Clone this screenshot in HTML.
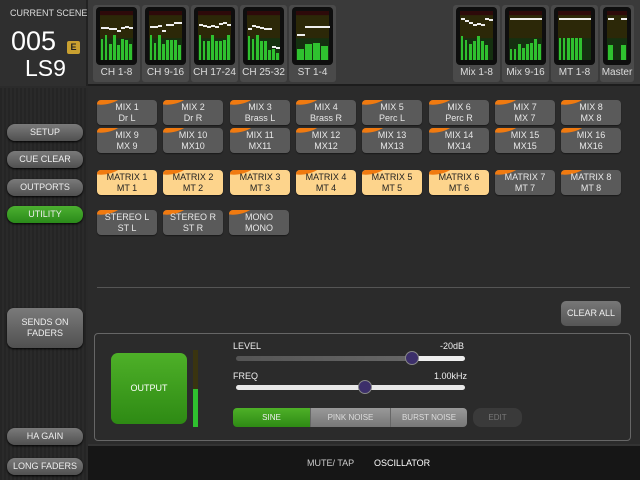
<!DOCTYPE html>
<html><head><meta charset="utf-8"><style>
*{box-sizing:border-box;margin:0;padding:0}
body{width:640px;height:480px;background:#2b2b2b;font-family:"Liberation Sans",sans-serif;color:#eee;position:relative;overflow:hidden}
.abs{position:absolute}
#top{left:0;top:0;width:640px;height:86px;background:#3a3a3a;border-bottom:2px solid #1c1c1c}
#scene{left:0;top:0;width:88px;height:86px;background:#2f2f2f;border-right:2px solid #222}
.mg{position:absolute;top:5px;height:77px;background:#4a4a4a;border-radius:3px}
.mb{position:absolute;left:3px;right:3px;top:2px;height:58px;background:#0e0e0e;border-radius:4px}
.mi{position:absolute;left:4px;right:4px;top:4px;bottom:5px;background:linear-gradient(#2e0a0a 0,#2e0a0a 8%,#2c2808 9%,#2c2808 55%,#153010 56%,#153010 100%)}
.bar{position:absolute;bottom:0;background:#2fc12f}
.pk{position:absolute;height:2px;background:#eee}
.ml{position:absolute;left:0;right:0;top:62px;text-align:center;font-size:10px;color:#ddd}
#side{left:0;top:88px;width:88px;height:392px;background:repeating-linear-gradient(90deg,#252525 0,#252525 2px,#2a2a2a 2px,#2a2a2a 4px)}
.sb{position:absolute;left:7px;width:76px;height:17px;border-radius:8px;background:linear-gradient(#7a7a7a,#505050);font-size:9px;text-align:center;line-height:17px;color:#eee;box-shadow:0 1px 2px #000}
.b{position:absolute;width:60px;height:25px;border-radius:4px;background:#5a5a5a;font-size:9px;text-align:center;line-height:11px;padding-top:2px;color:#e8e8e8;overflow:hidden;box-shadow:0 1px 1px #1a1a1a}
.b:before{content:"";position:absolute;left:-4px;top:-6px;width:28px;height:10px;background:#f07a10;border-radius:50%;transform:rotate(-12deg)}
.b span{position:relative}
.b.o{background:#fdd48c;color:#222}
#bot{left:88px;top:444px;width:552px;height:36px;background:#161616;border-top:2px solid #333}
</style></head><body>
<div id="top" class="abs"></div>
<div id="scene" class="abs">
<div class="abs" style="left:10px;top:8px;font-size:9px;color:#ddd;white-space:nowrap">CURRENT SCENE</div>
<div class="abs" style="left:11px;top:26px;font-size:27px;color:#fff">005</div>
<div class="abs" style="left:67px;top:41px;width:13px;height:13px;background:#c9a030;border-radius:2px;font-size:9px;color:#222;text-align:center;line-height:13px;font-weight:bold">E</div>
<div class="abs" style="left:25px;top:55px;font-size:23px;color:#fff">LS9</div>
</div>
<div id="meters"></div>
<div id="side" class="abs"></div>
<div class="sb" style="top:124px">SETUP</div>
<div class="sb" style="top:151px">CUE CLEAR</div>
<div class="sb" style="top:179px">OUTPORTS</div>
<div class="sb" style="top:206px;background:linear-gradient(#4cb030,#2a8a1a)">UTILITY</div>
<div class="sb" style="top:308px;height:40px;border-radius:7px;line-height:11px;padding-top:9px">SENDS ON<br>FADERS</div>
<div class="sb" style="top:428px">HA GAIN</div>
<div class="sb" style="top:458px">LONG FADERS</div>
<div id="btns"></div>
<div class="abs" style="left:97px;top:287px;width:533px;height:1px;background:#555"></div>
<div class="abs" style="left:561px;top:301px;width:60px;height:25px;border-radius:5px;background:linear-gradient(#777,#555);font-size:9px;text-align:center;line-height:25px">CLEAR ALL</div>
<div class="abs" style="left:94px;top:333px;width:537px;height:108px;border:1px solid #666;border-radius:4px"></div>
<div class="abs" style="left:111px;top:353px;width:76px;height:71px;border-radius:7px;background:linear-gradient(#4eb028,#2e8a14);font-size:9px;text-align:center;line-height:71px;color:#fff">OUTPUT</div>
<div class="abs" style="left:193px;top:350px;width:5px;height:77px;background:#3a3410"></div>
<div class="abs" style="left:193px;top:389px;width:5px;height:38px;background:#2fc12f"></div>
<div class="abs" style="left:233px;top:341px;font-size:9px">LEVEL</div>
<div class="abs" style="left:440px;top:341px;font-size:9px">-20dB</div>
<div class="abs" style="left:236px;top:356px;width:229px;height:5px;border-radius:3px;background:linear-gradient(90deg,#555 0,#666 77%,#eee 77%)"></div>
<div class="abs" style="left:405px;top:351px;width:14px;height:14px;border-radius:50%;background:#3c2f6a;border:1px solid #888"></div>
<div class="abs" style="left:233px;top:371px;font-size:9px">FREQ</div>
<div class="abs" style="left:434px;top:371px;font-size:9px">1.00kHz</div>
<div class="abs" style="left:236px;top:385px;width:229px;height:5px;border-radius:3px;background:#e8e8e8"></div>
<div class="abs" style="left:358px;top:380px;width:14px;height:14px;border-radius:50%;background:#3c2f6a;border:1px solid #888"></div>
<div class="abs" style="left:233px;top:408px;width:234px;height:19px;border-radius:4px;overflow:hidden;font-size:8px;line-height:19px;text-align:center">
<div class="abs" style="left:0;top:0;width:77px;height:19px;background:linear-gradient(#4eb028,#2e8a14)">SINE</div>
<div class="abs" style="left:77px;top:0;width:80px;height:19px;background:linear-gradient(#999,#777);color:#ddd;border-left:1px solid #666">PINK NOISE</div>
<div class="abs" style="left:157px;top:0;width:77px;height:19px;background:linear-gradient(#999,#777);color:#ddd;border-left:1px solid #666">BURST NOISE</div>
</div>
<div class="abs" style="left:473px;top:408px;width:49px;height:19px;border-radius:8px;background:#3a3a3a;font-size:8px;line-height:19px;text-align:center;color:#777">EDIT</div>
<div id="bot" class="abs"></div>
<div class="abs" style="left:307px;top:458px;font-size:9px;color:#ccc">MUTE/ TAP</div>
<div class="abs" style="left:374px;top:458px;font-size:9px;color:#fff">OSCILLATOR</div>
<script>
var G=[[93,"CH 1-8",[34,40,26,40,24,34,32,26],[21,21,22,22,24,21,20,21]],[142,"CH 9-16",[40,28,40,26,32,32,32,24],[20,20,19,24,18,18,16,16]],[191,"CH 17-24",[40,30,30,40,30,30,32,40],[18,19,20,19,20,17,16,18]],[240,"CH 25-32",[38,34,40,30,30,16,18,12],[22,19,20,21,22,22,40,41]],[289,"ST 1-4",[18,26,28,22],[28,20,20,20]],
[453,"Mix 1-8",[38,32,26,30,38,30,24,0],[12,14,16,18,17,18,12,13]],[502,"Mix 9-16",[18,18,26,20,26,28,34,26],[12,12,12,12,12,12,12,12]],[551,"MT 1-8",[36,36,36,36,36,36,0,0],[12,12,12,12,12,12,12,12]],[600,"Master",[24,0,24],[12,0,12]]];
var h="";G.forEach(function(g){var w=g[0]==600?34:47,n=g[2].length;h+='<div class="mg" style="left:'+g[0]+'px;width:'+w+'px"><div class="mb"><div class="mi">';var iw=w-14,bw=iw/n;for(var i=0;i<n;i++){var l=(i*bw+0.5).toFixed(1),ww=(bw-1.3).toFixed(1);if(g[2][i])h+='<div class="bar" style="left:'+l+'px;width:'+ww+'px;height:'+Math.round(g[2][i]*0.62)+'px"></div>';if(g[3][i])h+='<div class="pk" style="left:'+l+'px;width:'+(bw).toFixed(1)+'px;top:'+(g[3][i]-5)+'px"></div>'}h+='</div></div><div class="ml">'+g[1]+'</div></div>'});
document.getElementById("meters").innerHTML=h;
var r=[["MIX 1","Dr L"],["MIX 2","Dr R"],["MIX 3","Brass L"],["MIX 4","Brass R"],["MIX 5","Perc L"],["MIX 6","Perc R"],["MIX 7","MX 7"],["MIX 8","MX 8"]],b="";
function bt(x,y,a,c,o){b+='<div class="b'+(o?' o':'')+'" style="left:'+x+'px;top:'+y+'px"><span>'+a+'<br>'+c+'</span></div>'}
for(var i=0;i<8;i++){var x=Math.round(97+i*66.3);bt(x,100,r[i][0],r[i][1]);bt(x,128,"MIX "+(i+9),"MX"+(i+9<10?" "+(i+9):(i+9)));bt(x,170,"MATRIX "+(i+1),"MT "+(i+1),i<6)}
bt(97,210,"STEREO L","ST L");bt(163,210,"STEREO R","ST R");bt(229,210,"MONO","MONO");
document.getElementById("btns").innerHTML=b;
</script>
</body></html>
